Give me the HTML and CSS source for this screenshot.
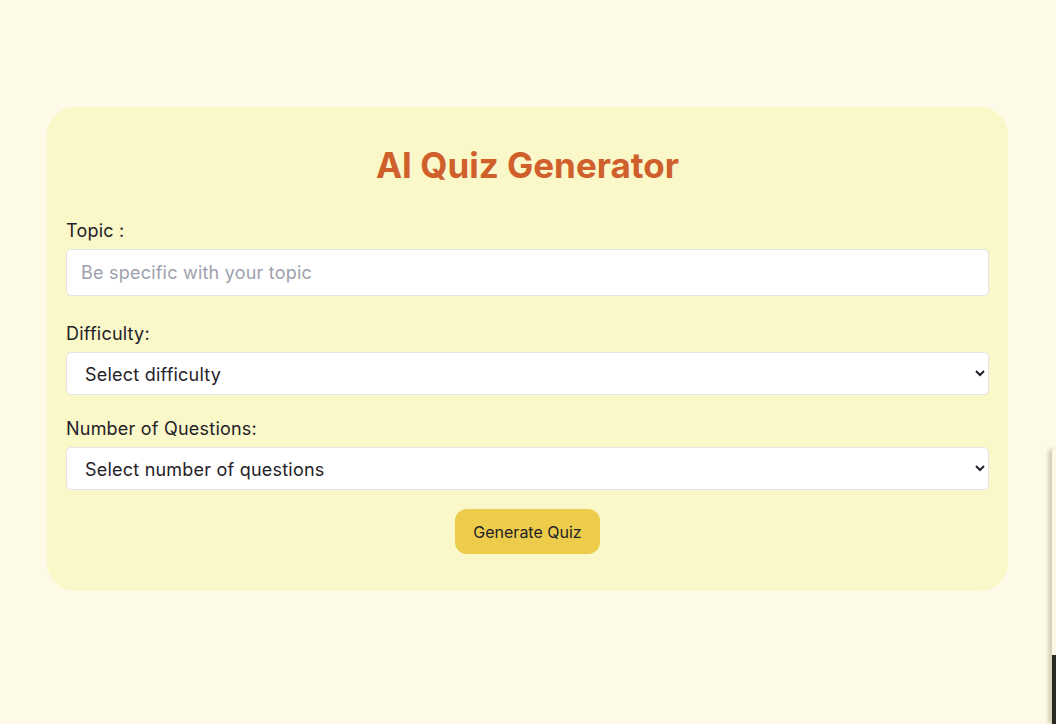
FILE: index.html
```html
<!DOCTYPE html>
<html lang="en">
<head>
<meta charset="utf-8">
<title>AI Quiz Generator</title>
<link rel="stylesheet" href="styles.css">
</head>
<body>
<main class="page">
  <section class="card">
    <h1 class="title">AI Quiz Generator</h1>
    <form class="form">
      <label class="label" for="topic">Topic :</label>
      <input class="input" id="topic" type="text" placeholder="Be specific with your topic">
      <label class="label label-gap" for="difficulty">Difficulty:</label>
      <select class="select" id="difficulty">
        <option>Select difficulty</option>
        <option>Easy</option>
        <option>Medium</option>
        <option>Hard</option>
      </select>
      <label class="label label-gap2" for="count">Number of Questions:</label>
      <select class="select" id="count">
        <option>Select number of questions</option>
        <option>5</option>
        <option>10</option>
      </select>
      <div class="actions">
        <button class="btn" type="button">Generate Quiz</button>
      </div>
    </form>
  </section>
</main>
<div class="side-panel"><div class="side-dark"></div></div>
</body>
</html>
```
FILE: styles.css
```css
* { box-sizing: border-box; }
html, body { margin: 0; padding: 0; }
body {
  background: #fdfbe7;
  font-family: Inter, "Noto Sans", sans-serif;
  color: #1f2228;
  height: 724px;
  overflow: hidden;
  position: relative;
}
.page {
  padding-top: 107px;
}
.card {
  width: 961px;
  margin: 0 0 0 47px;
  background: #faf7c9;
  border-radius: 28px;
  padding: 31px 19px 37px;
}
.title {
  margin: 0 0 25px;
  text-align: center;
  font-size: 35px;
  line-height: 54px;
  font-weight: 700;
  color: #d0602b;
}
.form {
  display: flex;
  flex-direction: column;
}
.label {
  font-size: 18px;
  line-height: 27px;
  letter-spacing: 0.012em;
  margin-bottom: 5px;
  color: #1f2228;
}
.label-gap { margin-top: 24px; }
.label-gap2 { margin-top: 20px; }
.input {
  height: 47px;
  border: 1px solid #e3e4e8;
  border-radius: 5px;
  background: #fff;
  padding: 0 14px;
  font-family: inherit;
  font-size: 18px;
  letter-spacing: 0.012em;
  color: #1f2228;
  outline: none;
}
.input::placeholder { color: #9ea1ad; }
.select {
  height: 43px;
  border: 1px solid #e3e4e8;
  border-radius: 5px;
  background: #fff;
  padding: 1px 10px 0 14px;
  font-family: inherit;
  font-size: 18px;
  letter-spacing: 0.012em;
  color: #1f2228;
  outline: none;
}
.actions {
  display: flex;
  justify-content: center;
  margin-top: 19px;
}
.btn {
  width: 145px;
  height: 45px;
  border: none;
  border-radius: 12px;
  background: #edcb4b;
  font-family: inherit;
  font-size: 16px;
  color: #1f2228;
  cursor: pointer;
}
.side-panel {
  position: absolute;
  left: 1052px;
  top: 449px;
  width: 4px;
  height: 275px;
  background: #fbf9e6;
  border-radius: 6px 0 0 0;
  box-shadow: -3px 0 4px rgba(80, 70, 30, 0.35);
}
.side-dark {
  position: absolute;
  left: 0;
  top: 206px;
  width: 100%;
  height: 69px;
  background: #2b2a22;
}
```
